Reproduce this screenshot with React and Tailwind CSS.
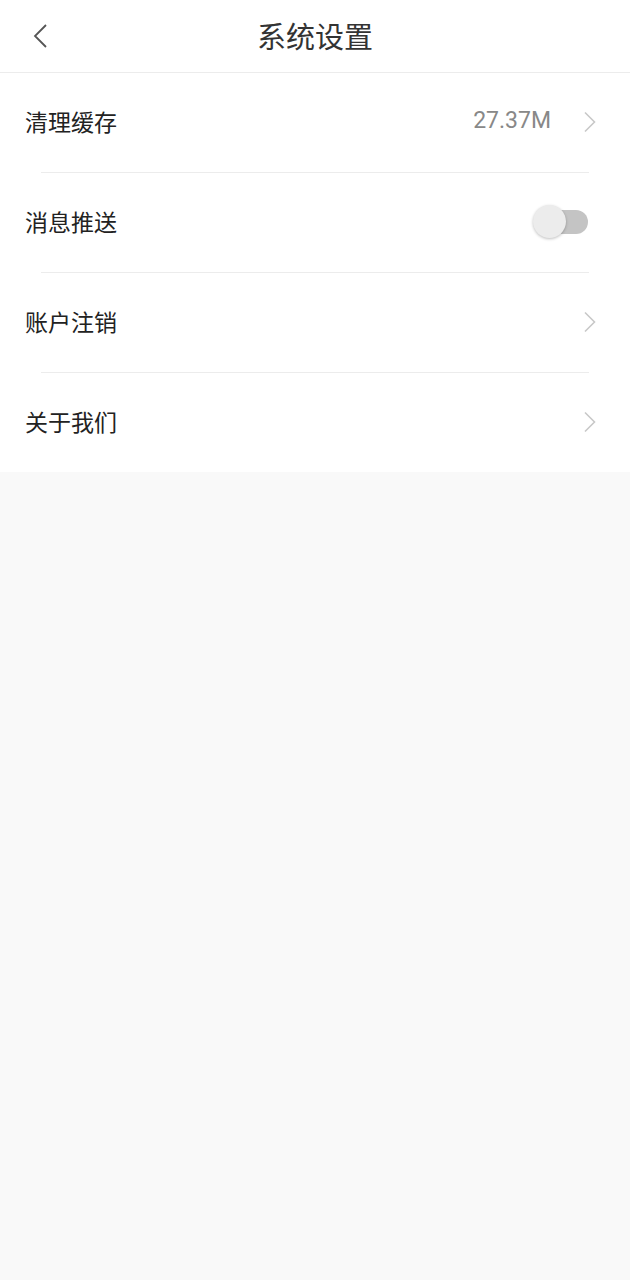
const rows = [
  { label: "清理缓存", value: "27.37M", kind: "arrow" },
  { label: "消息推送", kind: "switch" },
  { label: "账户注销", kind: "arrow" },
  { label: "关于我们", kind: "arrow" },
];

function Chevron() {
  return (
    <svg width="14" height="22" viewBox="0 0 14 22" fill="none">
      <path d="M2 1.5 L11.5 11 L2 20.5" stroke="#c8c8c8" strokeWidth="1.6" />
    </svg>
  );
}

export default function App() {
  return (
    <div
      className="min-h-[1280px] bg-[#f9f9f9]"
      style={{ fontFamily: '"Noto Sans CJK SC", "Noto Sans", Roboto, sans-serif' }}
    >
      {/* Header */}
      <div className="relative h-[73px] bg-white border-b border-[#ececec] flex items-center justify-center">
        <div className="absolute left-[30px] top-[23px]">
          <svg width="20" height="26" viewBox="0 0 20 26" fill="none">
            <path d="M16 2 L5 13 L16 24" stroke="#555" strokeWidth="1.8" />
          </svg>
        </div>
        <h1 className="text-[29px] text-[#333] leading-none -mt-[1px]">系统设置</h1>
      </div>

      {/* List */}
      <div className="bg-white">
        {rows.map((r, i) => (
          <div key={r.label}>
            <div className="h-[99px] flex items-center pl-[25px] pr-[33px] pb-[2px]">
              <span className="text-[23px] text-[#222] flex-1">{r.label}</span>
              {r.value && (
                <span className="text-[23px] text-[#888] mr-[32px]" style={{ fontFamily: 'Roboto, sans-serif' }}>
                  {r.value}
                </span>
              )}
              {r.kind === "arrow" && <Chevron />}
              {r.kind === "switch" && (
                <div className="relative w-[55px] h-[33px] mr-[9px]">
                  <div className="absolute right-0 top-[5px] w-[40px] h-[24px] rounded-full bg-[#c4c4c4]" />
                  <div className="absolute left-0 top-0 w-[33px] h-[33px] rounded-full bg-[#ececec] shadow-[0_1px_3px_rgba(0,0,0,0.25)]" />
                </div>
              )}
            </div>
            {i < rows.length - 1 && <div className="mx-[41px] h-px bg-[#ececec]" />}
          </div>
        ))}
      </div>
    </div>
  );
}
